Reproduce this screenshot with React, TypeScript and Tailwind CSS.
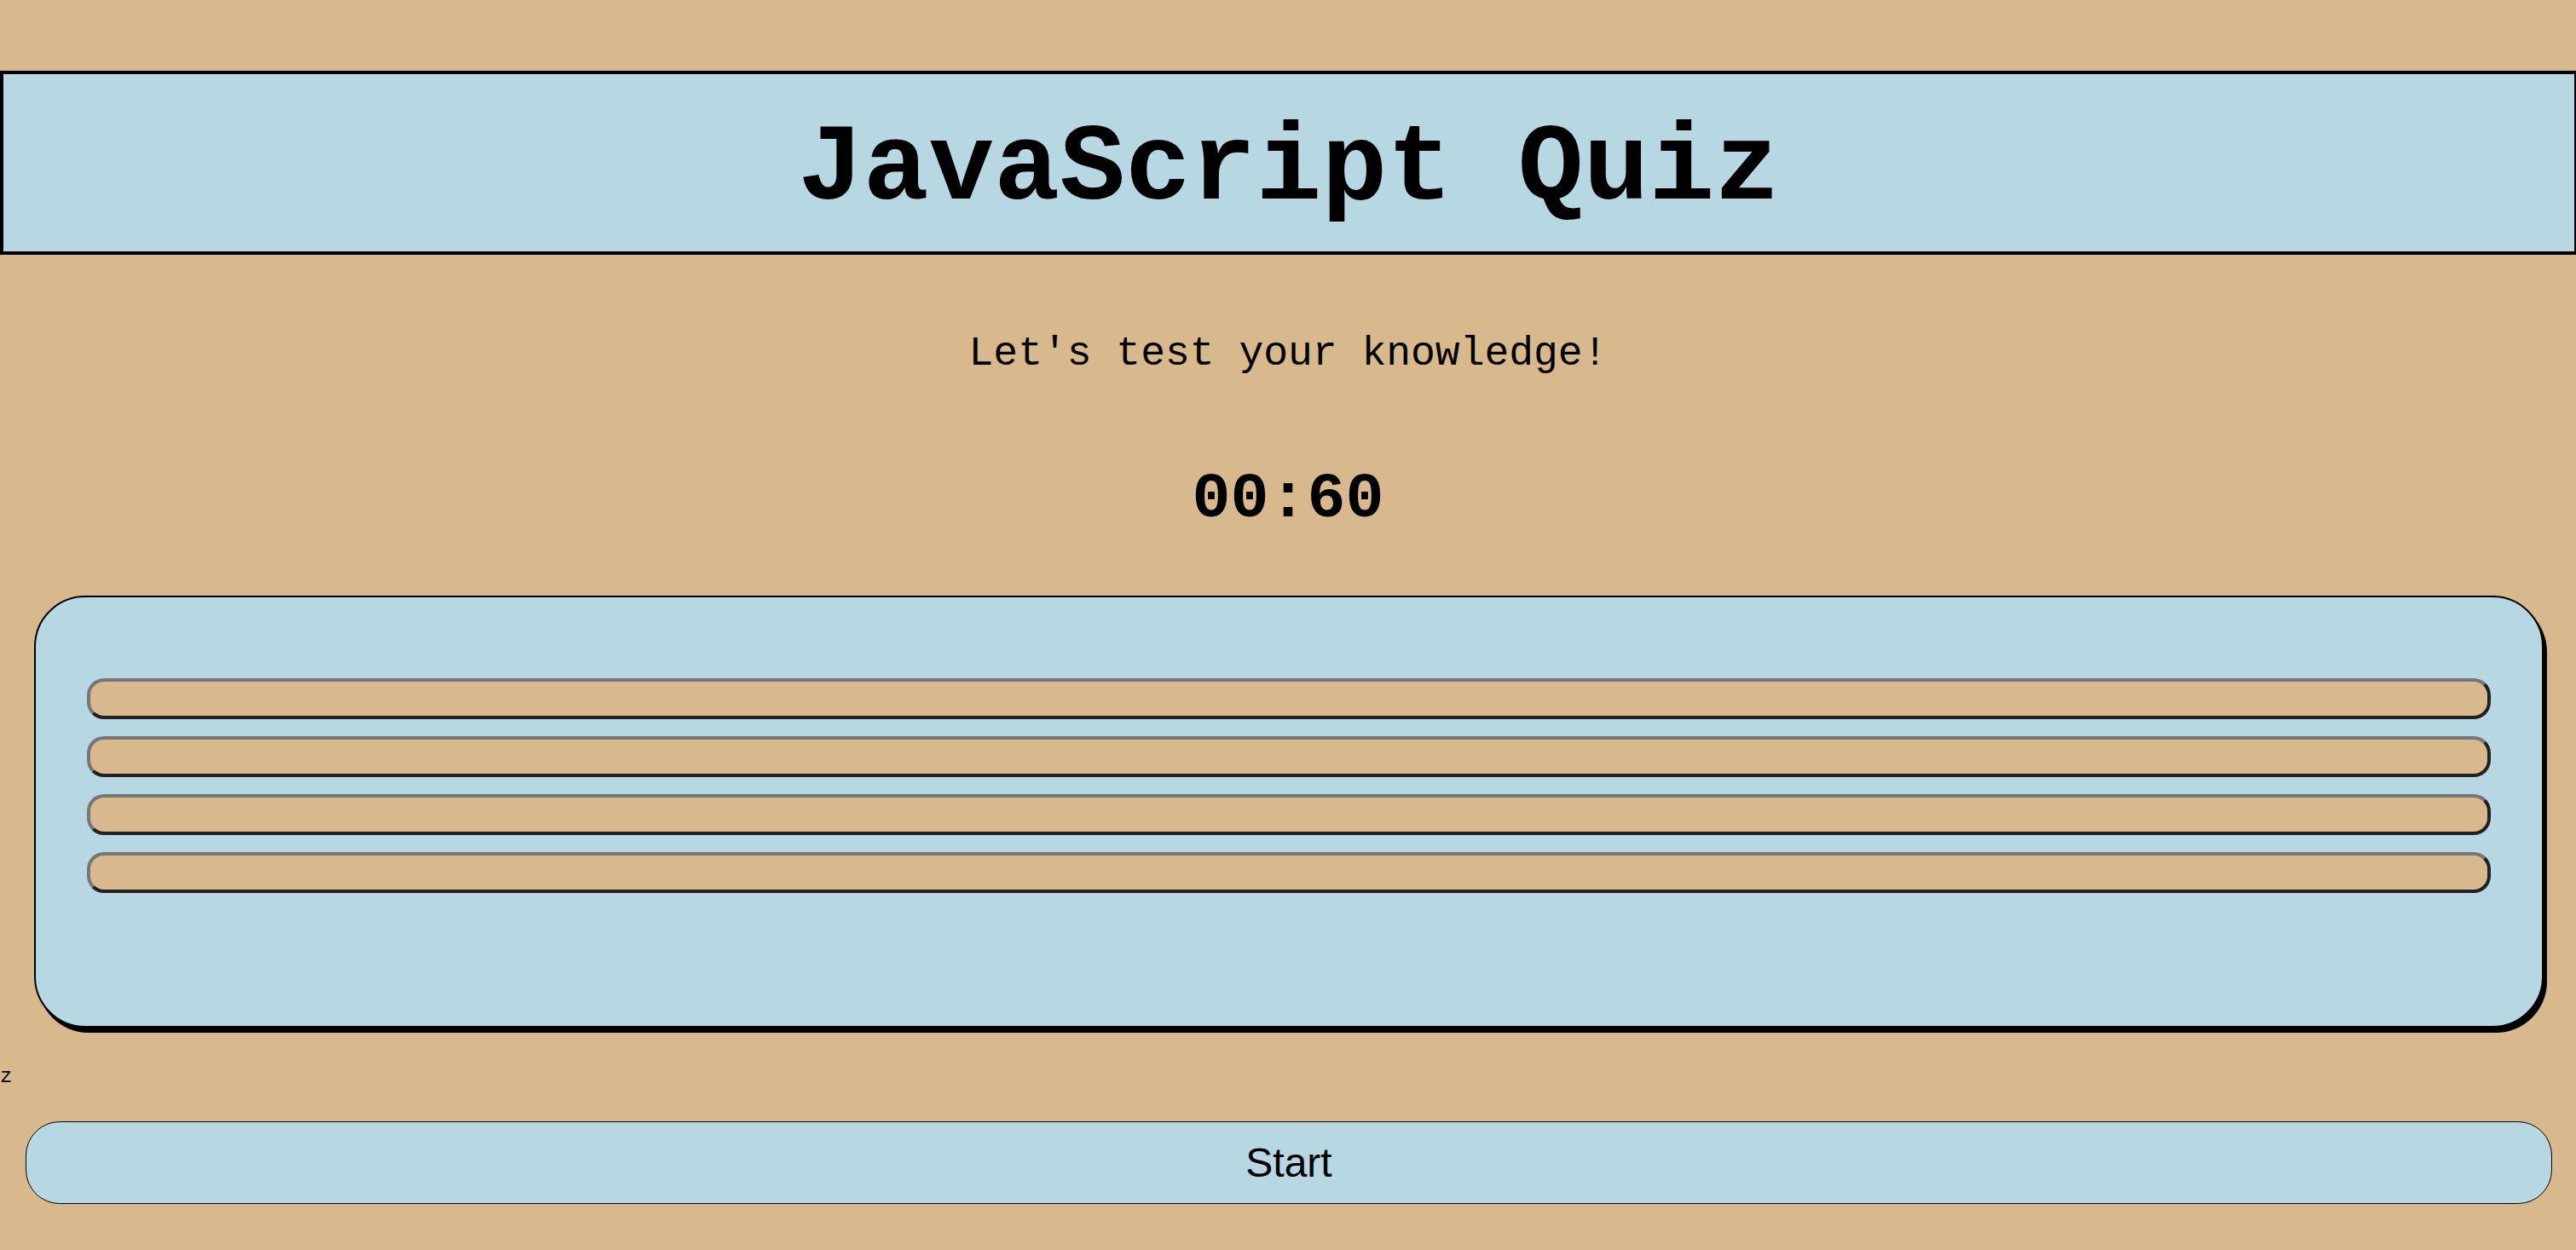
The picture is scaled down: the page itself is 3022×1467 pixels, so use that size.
import React from "react";

const choices = ["Choice 1", "Choice 2", "Choice 3", "Choice 4"];

export default function App() {
  return (
    <div className="flex min-h-screen flex-col bg-[#d8b98d] pt-[83px] pb-[54px] font-['Courier_New','Liberation_Mono',monospace] text-2xl text-black">
      <header className="border-4 border-r-2 border-black bg-[#b7d7e3] pt-10 pb-6 text-center">
        <h1 className="text-[128px] leading-[144px] font-bold">JavaScript Quiz</h1>
      </header>

      <p className="mt-[89px] text-center text-5xl leading-[54px]">Let's test your knowledge!</p>

      <h2 className="mt-[103px] text-center text-[75px] leading-[84px] font-bold">00:60</h2>

      <main className="mt-[70px] mr-[38px] ml-10 flex flex-col gap-5 rounded-[60px] border-2 border-black bg-[#b7d7e3] px-[60px] pt-[95px] pb-[156px] shadow-[4px_6px_0_#000]">
        {choices.map((choice) => (
          <button
            key={choice}
            type="button"
            aria-label={choice}
            className="h-12 w-full rounded-[20px] border-4 border-t-[#767676] border-r-[#212121] border-b-[#212121] border-l-[#767676] bg-[#d8b98d]"
          />
        ))}
      </main>

      <p className="mt-11 leading-7">z</p>

      <button
        type="button"
        className="mt-[38px] mr-7 ml-[30px] h-[97px] rounded-[40px] border border-black bg-[#b7d7e3] font-['Liberation_Sans',Arial,sans-serif] text-5xl"
      >
        Start
      </button>
    </div>
  );
}
